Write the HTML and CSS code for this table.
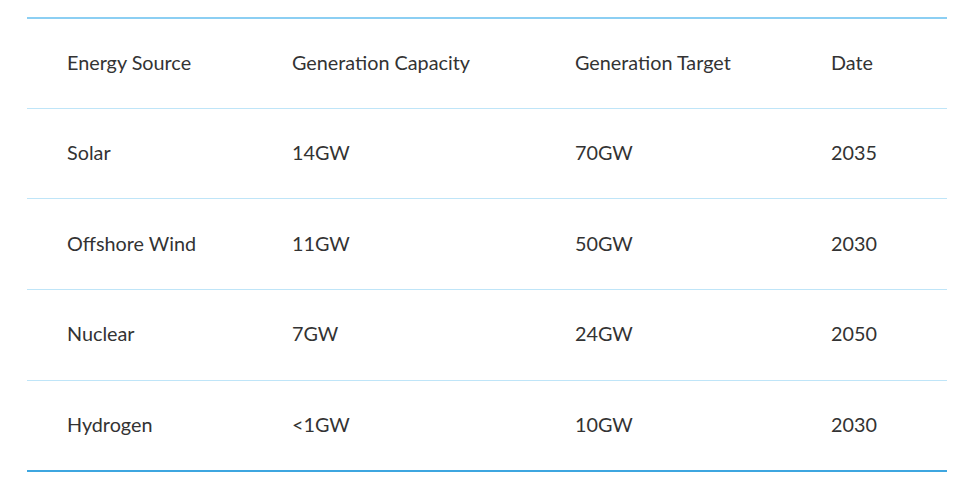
FILE: index.html
```html
<!DOCTYPE html>
<html>
<head>
<meta charset="utf-8">
<link rel="stylesheet" href="styles.css">
</head>
<body>
<div class="wrap">
<table class="energy">
  <thead>
    <tr><th>Energy Source</th><th>Generation Capacity</th><th>Generation Target</th><th>Date</th></tr>
  </thead>
  <tbody>
    <tr><td>Solar</td><td>14GW</td><td>70GW</td><td>2035</td></tr>
    <tr><td>Offshore Wind</td><td>11GW</td><td>50GW</td><td>2030</td></tr>
    <tr><td>Nuclear</td><td>7GW</td><td>24GW</td><td>2050</td></tr>
    <tr><td>Hydrogen</td><td>&lt;1GW</td><td>10GW</td><td>2030</td></tr>
  </tbody>
</table>
</div>
</body>
</html>
```
FILE: styles.css
```css
html, body { margin: 0; padding: 0; background: #fff; }
.wrap { padding: 17px 13px 0 27px; }
.energy {
  width: 920px;
  border-collapse: collapse;
  font-family: Lato, "Open Sans", sans-serif;
  font-size: 19.8px;
  color: #333;
  border-top: 2px solid #8ccff3;
  border-bottom: 2px solid #3ea6e0;
}
.energy th, .energy td {
  box-sizing: border-box;
  text-align: left;
  font-weight: normal;
  padding: 0 0 3px 40px;
  vertical-align: middle;
  border-bottom: 1px solid #bfe5f8;
}
.energy th { height: 90px; }
.energy td { height: 90.8px; }
.energy tbody tr:last-child td { border-bottom: none; }
.energy th:nth-child(1) { width: 225px; }
.energy th:nth-child(2) { width: 283px; }
.energy th:nth-child(3) { width: 256px; }
```
